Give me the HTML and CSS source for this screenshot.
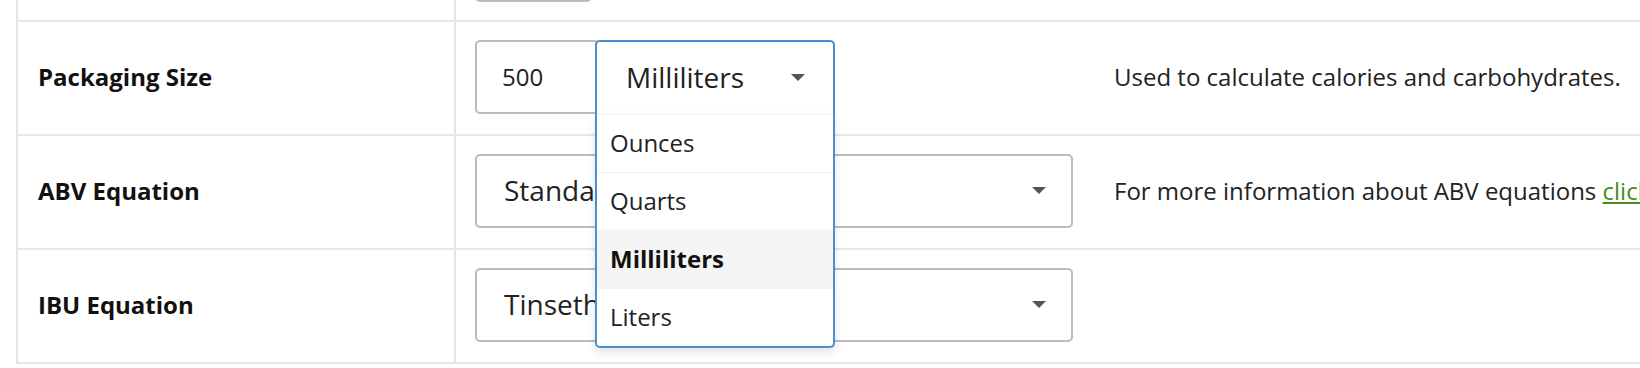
FILE: index.html
```html
<!DOCTYPE html>
<html lang="en">
<head>
  <meta charset="UTF-8">
  <meta name="viewport" content="width=device-width, initial-scale=1.0">
  <title>Packaging</title>
  <link rel="stylesheet" href="styles.css">
</head>
<body>
  <div class="form">
    <!-- 上一行，只露出底部 -->
    <div class="row">
      <div class="label"></div>
      <div class="field field-prev">
        <div class="input stub"></div>
      </div>
      <div class="help"></div>
    </div>

    <div class="row">
      <div class="label">Packaging Size</div>
      <div class="field">
        <div class="size-group">
          <div class="input num">500</div>
          <div class="select open">
            <span class="value">Milliliters</span>
            <span class="caret"></span>
            <ul class="options">
              <li>Ounces</li>
              <li>Quarts</li>
              <li class="selected">Milliliters</li>
              <li>Liters</li>
            </ul>
          </div>
        </div>
      </div>
      <div class="help">Used to calculate calories and carbohydrates.</div>
    </div>

    <div class="row">
      <div class="label">ABV Equation</div>
      <div class="field">
        <div class="select wide">
          <span class="value">Standard</span>
          <span class="caret"></span>
        </div>
      </div>
      <div class="help"><span>For more information about ABV equations&nbsp;<a href="#">click here</a>.</span></div>
    </div>

    <div class="row">
      <div class="label">IBU Equation</div>
      <div class="field">
        <div class="select wide">
          <span class="value">Tinseth</span>
          <span class="caret"></span>
        </div>
      </div>
      <div class="help"></div>
    </div>
  </div>
</body>
</html>
```

FILE: styles.css
```css
body {
  margin: 0;
  overflow: hidden;
  background-color: #fff;
  font-family: "Open Sans", "Noto Sans", sans-serif;
  color: #222;
}

.form {
  margin-top: -92px;
  margin-left: 16px;
  width: 1900px;
  border-left: 2px solid #e4e4e4;
}

.row {
  display: grid;
  grid-template-columns: 436px 660px 1fr;
  border-bottom: 2px solid #e8e8e8;
}

.label {
  display: flex;
  align-items: center;
  padding-left: 20px;
  padding-bottom: 3px;
  font-size: 24px;
  font-weight: bold;
  color: #111;
}

.field {
  border-left: 2px solid #e4e4e4;
  padding: 18px 41px 20px 19px;
}

.field-prev {
  padding-top: 20px;
  padding-bottom: 18px;
}

.help {
  display: flex;
  align-items: center;
  padding-bottom: 3px;
  font-size: 24px;
  white-space: nowrap;
}

.help a {
  color: #4a8a22;
}

.input {
  box-sizing: border-box;
  height: 74px;
  border: 2px solid #bbb;
  border-radius: 5px;
  display: flex;
  align-items: center;
  padding-bottom: 2px;
  font-size: 24px;
}

.stub {
  width: 117px;
}

.size-group {
  display: flex;
}

.num {
  width: 122px;
  padding-left: 25px;
  border-top-right-radius: 0;
  border-bottom-right-radius: 0;
}

.select {
  position: relative;
  box-sizing: border-box;
  height: 74px;
  border: 2px solid #bbb;
  border-radius: 5px;
  display: flex;
  align-items: center;
  justify-content: space-between;
  font-size: 28px;
}

.wide {
  width: 598px;
  padding: 0 25px 2px 27px;
}

.caret {
  width: 0;
  height: 0;
  border-left: 7px solid transparent;
  border-right: 7px solid transparent;
  border-top: 7px solid #555;
}

/* 展开的单位下拉框 */
.open {
  width: 240px;
  margin-left: -2px;
  padding: 0 28px 2px 29px;
  border-color: #4a90d0;
  border-bottom: none;
  border-bottom-left-radius: 0;
  border-bottom-right-radius: 0;
  background-color: #fff;
  z-index: 10;
}

.options {
  position: absolute;
  top: 100%;
  left: -2px;
  right: -2px;
  margin: 0;
  padding: 0;
  list-style: none;
  background-color: #fff;
  border: 2px solid #4a90d0;
  border-top: none;
  border-radius: 0 0 5px 5px;
  box-shadow: 0 4px 8px rgba(0, 0, 0, .12);
  font-size: 24px;
}

.options li {
  box-sizing: border-box;
  height: 58px;
  display: flex;
  align-items: center;
  padding-left: 13px;
  padding-bottom: 3px;
  border-top: 1px solid #f2f2f2;
}

.options .selected {
  background-color: #f5f5f5;
  font-weight: bold;
  color: #111;
}
```
